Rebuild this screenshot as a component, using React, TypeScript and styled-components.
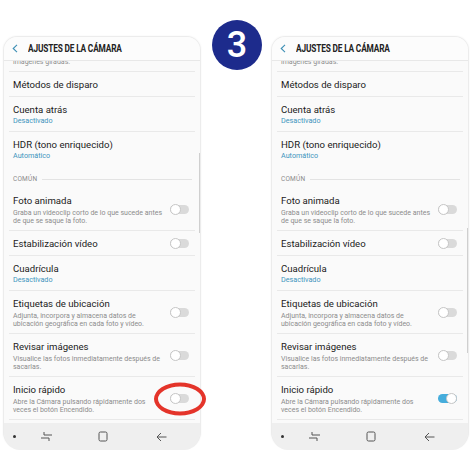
import { styled, createGlobalStyle } from 'styled-components';

const GlobalStyle = createGlobalStyle`
  html, body {
    margin: 0;
    padding: 0;
    background: #ffffff;
    font-family: Roboto, "Noto Sans", Arial, sans-serif;
  }
`;

type Item = {
  label: string;
  value?: string;
  sub?: string[];
  toggle?: boolean;
  marked?: boolean;
};

function Toggle({ on, marked }: { on: boolean; marked?: boolean }) {
  return (
    <ToggleWrap>
      <Track $on={on}>
        <Knob $on={on} />
      </Track>
      {marked && <Mark />}
    </ToggleWrap>
  );
}

function Phone({ quickOn, marked }: { quickOn: boolean; marked?: boolean }) {
  const top: Item[] = [
    { label: 'Métodos de disparo' },
    { label: 'Cuenta atrás', value: 'Desactivado' },
  ];
  const common: Item[] = [
    { label: 'Foto animada', sub: ['Graba un videoclip corto de lo que sucede antes', 'de que se saque la foto.'], toggle: false },
    { label: 'Estabilización vídeo', toggle: false },
    { label: 'Cuadrícula', value: 'Desactivado' },
    { label: 'Etiquetas de ubicación', sub: ['Adjunta, incorpora y almacena datos de', 'ubicación geográfica en cada foto y vídeo.'], toggle: false },
    { label: 'Revisar imágenes', sub: ['Visualice las fotos inmediatamente después de', 'sacarlas.'], toggle: false },
    { label: 'Inicio rápido', sub: ['Abre la Cámara pulsando rápidamente dos', 'veces el botón Encendido.'], toggle: quickOn, marked },
  ];

  const renderRow = (item: Item, i: number) => (
    <Row key={i}>
      <Texts>
        <Label>{item.label}</Label>
        {item.value && <Value>{item.value}</Value>}
        {item.sub && (
          <SubBlock>
            {item.sub.map((s, j) => (
              <Sub key={j}>{s}</Sub>
            ))}
          </SubBlock>
        )}
      </Texts>
      {item.toggle !== undefined && <Toggle on={item.toggle} marked={item.marked} />}
    </Row>
  );

  return (
    <PhoneBox>
      <Header>
        <Back>
          <svg width="6" height="9" viewBox="0 0 6 9">
            <path d="M5 0.8 L1.2 4.5 L5 8.2" fill="none" stroke="#3d8fb5" strokeWidth="1.1" />
          </svg>
        </Back>
        <Title>AJUSTES DE LA CÁMARA</Title>
      </Header>
      <Content>
        <TailRow>
          <Sub>imágenes giradas.</Sub>
        </TailRow>
        {top.map(renderRow)}
        <Row $last>
          <Texts>
            <Label>HDR (tono enriquecido)</Label>
            <Value>Automático</Value>
          </Texts>
        </Row>
        <Section>
          <span>COMÚN</span>
          <SectionLine />
        </Section>
        {common.map(renderRow)}
        <ScrollThumb $top={quickOn ? 191 : 116} $height={quickOn ? 125 : 80} />
      </Content>
      <Nav>
        <NavCell>
          <Dot />
        </NavCell>
        <NavCell>
          <svg width="13" height="11" viewBox="0 0 13 11">
            <path d="M4 1 V4 H12" fill="none" stroke="#555" strokeWidth="1" />
            <path d="M1 7 H9 V10" fill="none" stroke="#555" strokeWidth="1" />
          </svg>
        </NavCell>
        <NavCell>
          <svg width="10" height="11" viewBox="0 0 10 11">
            <rect x="1" y="1" width="8" height="9" rx="1.5" fill="none" stroke="#555" strokeWidth="1" />
          </svg>
        </NavCell>
        <NavCell>
          <svg width="11" height="10" viewBox="0 0 11 10">
            <path d="M5 1 L1 5 L5 9 M1 5 H10.5" fill="none" stroke="#555" strokeWidth="1" />
          </svg>
        </NavCell>
      </Nav>
    </PhoneBox>
  );
}

export default function App() {
  return (
    <>
      <GlobalStyle />
      <Page>
        <Phone quickOn={false} marked />
        <Badge>3</Badge>
        <Phone quickOn />
      </Page>
    </>
  );
}

const Page = styled.div`
  width: 472px;
  height: 450px;
  display: flex;
  align-items: flex-start;
  padding-left: 3px;
  box-sizing: border-box;
  overflow: hidden;
`;

const Badge = styled.div`
  width: 50px;
  height: 50px;
  margin: 20px 9px 0 11px;
  border-radius: 50%;
  background: #1d2b8c;
  color: #ffffff;
  display: flex;
  justify-content: center;
  align-items: center;
  font-size: 36px;
  font-weight: 500;
  line-height: 1;
  flex-shrink: 0;
`;

const PhoneBox = styled.div`
  width: 198px;
  height: 413px;
  margin-top: 36px;
  flex-shrink: 0;
  display: flex;
  flex-direction: column;
  background: #fafafa;
  border: 1px solid #ececec;
  border-radius: 14px 14px 17px 17px;
  box-shadow: 0 0 2px rgba(0, 0, 0, 0.06);
  box-sizing: border-box;
`;

const Header = styled.div`
  height: 24px;
  flex-shrink: 0;
  display: flex;
  align-items: center;
  padding-left: 8px;
  background: #fcfcfc;
  border-bottom: 1px solid #e8e8e8;
  border-radius: 13px 13px 0 0;
  box-sizing: border-box;
  position: relative;
  z-index: 2;
`;

const Back = styled.span`
  display: flex;
  width: 16px;
`;

const Title = styled.span`
  font-size: 10.5px;
  font-weight: 700;
  color: #222;
  letter-spacing: -0.2px;
  transform: scaleX(0.79);
  transform-origin: left center;
  white-space: nowrap;
`;

const Content = styled.div`
  flex: 1;
  padding: 0 5px;
  position: relative;
`;

const Row = styled.div<{ $last?: boolean }>`
  display: flex;
  align-items: center;
  padding: 6px 6px 5px 4px;
  border-bottom: ${(p) => (p.$last ? 'none' : '1px solid #e9e9e9')};
`;

const TailRow = styled.div`
  margin-top: -3px;
  padding: 0 4px 5px;
  border-bottom: 1px solid #e9e9e9;
`;

const Texts = styled.div`
  flex: 1;
  min-width: 0;
`;

const Label = styled.div`
  font-size: 9.6px;
  line-height: 13px;
  color: #1b1b1b;
  white-space: nowrap;
`;

const Value = styled.div`
  font-size: 7.2px;
  line-height: 10px;
  color: #3c94bd;
`;

const SubBlock = styled.div`
  margin-top: 2px;
`;

const Sub = styled.div`
  font-size: 7px;
  line-height: 8px;
  color: #8c8c8c;
  white-space: nowrap;
`;

const Section = styled.div`
  display: flex;
  align-items: center;
  gap: 5px;
  padding: 9px 3px 4px 4px;
  font-size: 6.5px;
  line-height: 9px;
  color: #8a8a8a;
  letter-spacing: 0.2px;
`;

const SectionLine = styled.div`
  flex: 1;
  height: 1.5px;
  background: #e3e3e3;
`;

const ToggleWrap = styled.div`
  position: relative;
  flex-shrink: 0;
  width: 19px;
  height: 11px;
  display: flex;
  align-items: center;
`;

const Track = styled.div<{ $on: boolean }>`
  position: relative;
  width: 19px;
  height: 9px;
  border-radius: 5px;
  background: ${(p) => (p.$on ? '#46addc' : '#dadada')};
`;

const Knob = styled.div<{ $on: boolean }>`
  position: absolute;
  top: -1px;
  left: ${(p) => (p.$on ? '8px' : '0')};
  width: 11px;
  height: 11px;
  border-radius: 50%;
  background: #ffffff;
  border: 1px solid #c6c6c6;
  box-sizing: border-box;
`;

const Mark = styled.div`
  position: absolute;
  left: 50%;
  top: 50%;
  width: 52px;
  height: 33px;
  transform: translate(-50%, -50%);
  border: 4.5px solid #e4342a;
  border-radius: 50%;
  box-sizing: border-box;
  z-index: 3;
`;

const ScrollThumb = styled.div<{ $top: number; $height: number }>`
  position: absolute;
  right: 0;
  top: ${(p) => p.$top - 24}px;
  width: 1.5px;
  height: ${(p) => p.$height}px;
  background: #cfcfcf;
`;

const Nav = styled.div`
  height: 27px;
  flex-shrink: 0;
  margin-top: 3px;
  display: grid;
  grid-template-columns: 20px 44px 70px 46px;
  align-items: center;
  justify-items: center;
  background: #efefef;
  border-radius: 0 0 16px 16px;
`;

const NavCell = styled.div`
  display: flex;
`;

const Dot = styled.div`
  width: 3px;
  height: 3px;
  border-radius: 50%;
  background: #333;
`;
